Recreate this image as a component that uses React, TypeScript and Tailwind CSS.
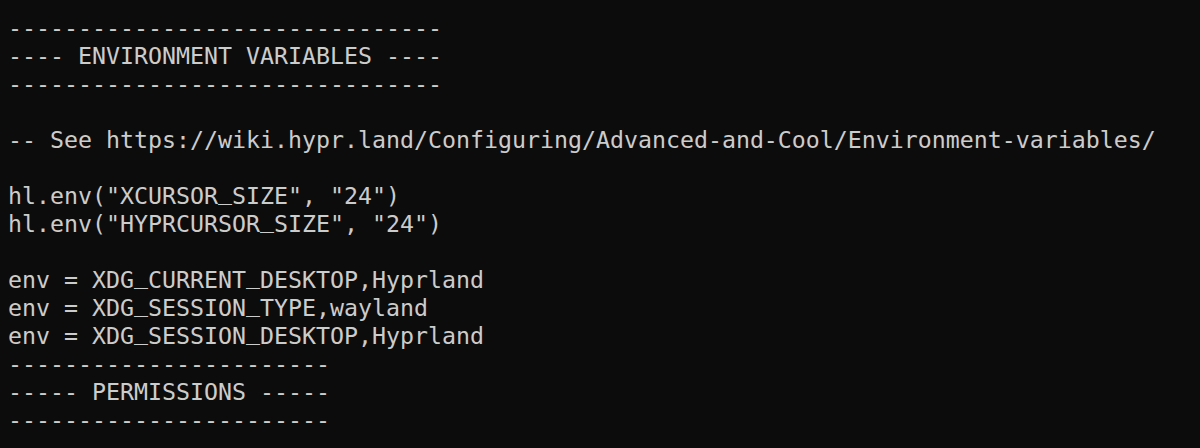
const lines = [
  "-------------------------------",
  "---- ENVIRONMENT VARIABLES ----",
  "-------------------------------",
  "",
  "-- See https://wiki.hypr.land/Configuring/Advanced-and-Cool/Environment-variables/",
  "",
  'hl.env("XCURSOR_SIZE", "24")',
  'hl.env("HYPRCURSOR_SIZE", "24")',
  "",
  "env = XDG_CURRENT_DESKTOP,Hyprland",
  "env = XDG_SESSION_TYPE,wayland",
  "env = XDG_SESSION_DESKTOP,Hyprland",
  "-----------------------",
  "----- PERMISSIONS -----",
  "-----------------------",
];

// underscores sit higher in the terminal font, so lift them a little
function Line({ text }: { text: string }) {
  const parts = text.split("_");
  return (
    <p className="h-[28px] whitespace-pre leading-[28px]">
      {parts.map((part, i) => (
        <span key={i}>
          {part}
          {i < parts.length - 1 && <span className="relative -top-[5px]">_</span>}
        </span>
      ))}
    </p>
  );
}

export default function App() {
  return (
    <div className="flex h-[448px] w-[1200px] flex-col bg-[#0c0c0c] pl-2 pt-[14px] font-['DejaVu_Sans_Mono',monospace] text-[23.25px] text-[#cccccc]">
      {lines.map((line, i) => (
        <Line key={i} text={line} />
      ))}
    </div>
  );
}
